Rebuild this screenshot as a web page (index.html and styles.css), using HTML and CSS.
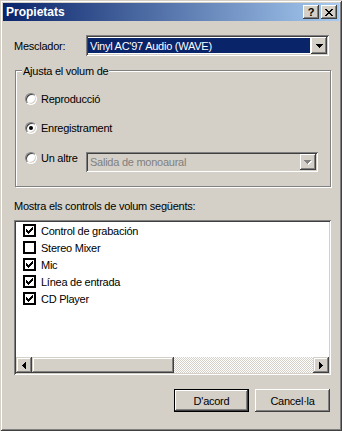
FILE: index.html
```html
<!DOCTYPE html>
<html lang="ca">
<head>
  <meta charset="UTF-8" />
  <title>Propietats</title>
  <link rel="stylesheet" href="styles.css">
</head>
<body>
  <div class="window">
    <div class="titlebar">
      <span class="title">Propietats</span>
      <span class="cap-btn help">?</span>
      <span class="cap-btn close">
        <svg width="8" height="7" viewBox="0 0 8 7"><path d="M0 0h2v1H0zM6 0h2v1H6zM1 1h2v1H1zM5 1h2v1H5zM2 2h4v1H2zM3 3h2v1H3zM2 4h4v1H2zM1 5h2v1H1zM5 5h2v1H5zM0 6h2v1H0zM6 6h2v1H6z"/></svg>
      </span>
    </div>

    <div class="content">
      <div class="mixer-row">
        <span class="mixer-label">Mesclador:</span>
        <div class="combo">
          <div class="combo-value selected">Vinyl AC'97 Audio (WAVE)</div>
          <div class="combo-btn">
            <svg width="7" height="4" viewBox="0 0 7 4"><path d="M0 0h7v1H0zM1 1h5v1H1zM2 2h3v1H2zM3 3h1v1H3z"/></svg>
          </div>
        </div>
      </div>

      <div class="group">
        <span class="group-title">Ajusta el volum de</span>
        <div class="option">
          <span class="radio-label"><span class="radio"></span>Reproducció</span>
        </div>
        <div class="option">
          <span class="radio-label"><span class="radio checked"></span>Enregistrament</span>
        </div>
        <div class="option other">
          <span class="radio-label"><span class="radio"></span>Un altre</span>
          <div class="combo disabled">
            <div class="combo-value">Salida de monoaural</div>
            <div class="combo-btn">
              <svg width="8" height="5" viewBox="0 0 8 5"><path fill="#fff" d="M1 1h7v1H1zM2 2h5v1H2zM3 3h3v1H3zM4 4h1v1H4z"/><path fill="#808080" d="M0 0h7v1H0zM1 1h5v1H1zM2 2h3v1H2zM3 3h1v1H3z"/></svg>
            </div>
          </div>
        </div>
      </div>

      <div class="list-label">Mostra els controls de volum següents:</div>
      <div class="list">
        <div class="list-items">
          <div class="list-item"><span class="check"><svg width="7" height="7" viewBox="0 0 7 7"><path d="M0 2h1v3H0zM1 3h1v3H1zM2 4h1v3H2zM3 3h1v3H3zM4 2h1v3H4zM5 1h1v3H5zM6 0h1v3H6z"/></svg></span>Control de grabación</div>
          <div class="list-item"><span class="check"></span>Stereo Mixer</div>
          <div class="list-item"><span class="check"><svg width="7" height="7" viewBox="0 0 7 7"><path d="M0 2h1v3H0zM1 3h1v3H1zM2 4h1v3H2zM3 3h1v3H3zM4 2h1v3H4zM5 1h1v3H5zM6 0h1v3H6z"/></svg></span>Mic</div>
          <div class="list-item"><span class="check"><svg width="7" height="7" viewBox="0 0 7 7"><path d="M0 2h1v3H0zM1 3h1v3H1zM2 4h1v3H2zM3 3h1v3H3zM4 2h1v3H4zM5 1h1v3H5zM6 0h1v3H6z"/></svg></span>Línea de entrada</div>
          <div class="list-item"><span class="check"><svg width="7" height="7" viewBox="0 0 7 7"><path d="M0 2h1v3H0zM1 3h1v3H1zM2 4h1v3H2zM3 3h1v3H3zM4 2h1v3H4zM5 1h1v3H5zM6 0h1v3H6z"/></svg></span>CD Player</div>
        </div>
        <div class="hscroll">
          <span class="sb-btn"><svg width="4" height="7" viewBox="0 0 4 7"><path d="M3 0h1v7H3zM2 1h1v5H2zM1 2h1v3H1zM0 3h1v1H0z"/></svg></span>
          <span class="sb-thumb"></span>
          <span class="sb-track"></span>
          <span class="sb-btn"><svg width="4" height="7" viewBox="0 0 4 7"><path d="M0 0h1v7H0zM1 1h1v5H1zM2 2h1v3H2zM3 3h1v1H3z"/></svg></span>
        </div>
      </div>

      <div class="buttons">
        <button class="btn default">D'acord</button>
        <button class="btn">Cancel·la</button>
      </div>
    </div>
  </div>
</body>
</html>
```

FILE: styles.css
```css
html, body {
  margin: 0;
}
body {
  font-family: "Liberation Sans", Arial, sans-serif;
  font-size: 11px;
  letter-spacing: -0.25px;
  color: #000;
  background: #d4d0c8;
}
svg {
  display: block;
  shape-rendering: crispEdges;
}
.window {
  width: 342px;
  height: 431px;
  box-sizing: border-box;
  padding: 3px;
  display: flex;
  flex-direction: column;
  background: #d4d0c8;
  box-shadow: inset 1px 1px #d4d0c8, inset -1px -1px #404040, inset 2px 2px #fff, inset -2px -2px #808080;
}
.titlebar {
  height: 18px;
  display: flex;
  align-items: center;
  padding: 0 2px 0 3px;
  background: linear-gradient(to right, #0a246a, #a6caf0);
  color: #fff;
  font-weight: bold;
  font-size: 12px;
  letter-spacing: 0;
}
.title {
  flex: 1;
}
.cap-btn {
  width: 16px;
  height: 14px;
  box-sizing: border-box;
  display: flex;
  align-items: center;
  justify-content: center;
  background: #d4d0c8;
  color: #000;
  font-size: 11px;
  box-shadow: inset -1px -1px #404040, inset 1px 1px #fff, inset -2px -2px #808080, inset 2px 2px #d4d0c8;
}
.help {
  margin-right: 2px;
}
.content {
  flex: 1;
  display: flex;
  flex-direction: column;
  padding: 14px 8px 0 11px;
}
.mixer-row {
  display: flex;
  align-items: center;
  height: 21px;
}
.mixer-label {
  width: 72px;
}
.combo {
  width: 243px;
  height: 21px;
  box-sizing: border-box;
  padding: 2px;
  display: flex;
  background: #fff;
  box-shadow: inset 1px 1px #808080, inset -1px -1px #fff, inset 2px 2px #404040, inset -2px -2px #d4d0c8;
}
.combo-value {
  flex: 1;
  display: flex;
  align-items: center;
  margin: 1px 1px 1px 0;
  padding-left: 2px;
  white-space: nowrap;
}
.combo-value.selected {
  background: #0a246a;
  color: #fff;
}
.combo-btn {
  width: 16px;
  box-sizing: border-box;
  display: flex;
  align-items: center;
  justify-content: center;
  background: #d4d0c8;
  box-shadow: inset -1px -1px #404040, inset 1px 1px #fff, inset -2px -2px #808080, inset 2px 2px #d4d0c8;
}
.combo.disabled {
  width: 232px;
  height: 20px;
  background: #d4d0c8;
  color: #808080;
}
.group {
  position: relative;
  height: 117px;
  box-sizing: border-box;
  margin: 14px 0 0 1px;
  padding: 22px 0 0 9px;
  border: 1px solid #808080;
  box-shadow: inset 1px 1px #fff, 1px 1px #fff;
}
.group-title {
  position: absolute;
  top: -6px;
  left: 6px;
  padding: 0 1px;
  line-height: 13px;
  background: #d4d0c8;
}
.option {
  display: flex;
  align-items: flex-start;
}
.option + .option {
  margin-top: 17px;
}
.option.other {
  margin-top: 18px;
}
.radio-label {
  display: flex;
  align-items: center;
  height: 12px;
}
.other .radio-label {
  width: 61px;
}
.radio {
  width: 12px;
  height: 12px;
  box-sizing: border-box;
  margin-right: 4px;
  display: flex;
  align-items: center;
  justify-content: center;
  border-radius: 50%;
  border: 1px solid;
  border-color: #808080 #fff #fff #808080;
  background: #fff;
  box-shadow: inset 1px 1px #404040, inset -1px -1px #d4d0c8;
}
.radio.checked::after {
  content: "";
  width: 4px;
  height: 4px;
  border-radius: 50%;
  background: #000;
}
.list-label {
  margin-top: 13px;
  line-height: 13px;
}
.list {
  height: 155px;
  box-sizing: border-box;
  margin-top: 7px;
  padding: 2px;
  display: flex;
  flex-direction: column;
  background: #fff;
  box-shadow: inset 1px 1px #808080, inset -1px -1px #fff, inset 2px 2px #404040, inset -2px -2px #d4d0c8;
}
.list-items {
  flex: 1;
  padding-left: 7px;
}
.list-item {
  display: flex;
  align-items: center;
  height: 17px;
}
.check {
  width: 13px;
  height: 13px;
  box-sizing: border-box;
  margin-right: 5px;
  display: flex;
  align-items: center;
  justify-content: center;
  border: 2px solid #000;
  background: #fff;
}
.hscroll {
  height: 16px;
  display: flex;
}
.sb-btn {
  width: 16px;
  display: flex;
  align-items: center;
  justify-content: center;
  background: #d4d0c8;
  box-shadow: inset -1px -1px #404040, inset 1px 1px #d4d0c8, inset -2px -2px #808080, inset 2px 2px #fff;
}
.sb-thumb {
  width: 142px;
  background: #d4d0c8;
  box-shadow: inset -1px -1px #404040, inset 1px 1px #d4d0c8, inset -2px -2px #808080, inset 2px 2px #fff;
}
.sb-track {
  flex: 1;
  background: repeating-conic-gradient(#d4d0c8 0 25%, #fff 0 50%) 0 0 / 2px 2px;
}
.buttons {
  display: flex;
  justify-content: flex-end;
  gap: 6px;
  margin-top: 14px;
  padding-right: 1px;
}
.btn {
  width: 75px;
  height: 23px;
  padding: 0;
  border: none;
  font-family: inherit;
  font-size: 11px;
  letter-spacing: -0.25px;
  color: #000;
  background: #d4d0c8;
  box-shadow: inset -1px -1px #404040, inset 1px 1px #fff, inset -2px -2px #808080, inset 2px 2px #d4d0c8;
}
.btn.default {
  border: 1px solid #000;
  box-shadow: inset -1px -1px #404040, inset 1px 1px #fff, inset -2px -2px #808080;
}
```
